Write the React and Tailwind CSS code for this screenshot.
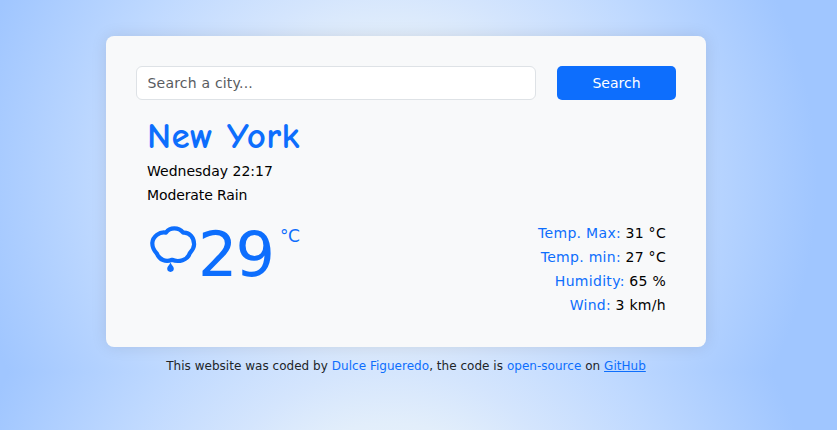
const font = "font-['Verdana','DejaVu_Sans',sans-serif]";

function Stat({ label, value }) {
  return (
    <li>
      <span className="tracking-[0.3px] text-[#0d6efd]">{label}:</span> <span className="tracking-[0.3px]">{value}</span>
    </li>
  );
}

export default function App() {
  return (
    <div className={`flex min-h-screen flex-col items-start bg-[radial-gradient(circle_at_390px_191px,#f5f8f7_0px,#e2eefb_140px,#d4e5fd_195px,#bfd9ff_290px,#a0c6ff_427px)] bg-[length:100%_382px] bg-[position:0_-10px] bg-repeat-y pt-9 pl-[106px] text-[14px] leading-6 text-black ${font}`}>
      <main className="h-[311px] w-[600px] rounded-[8px] bg-[#f8f9fa] p-[30px] shadow-[0_0_16px_rgba(0,0,0,0.1)]">
        <form className="flex gap-[21px]" onSubmit={(e) => e.preventDefault()}>
          <input
            className="h-[34px] w-[400px] rounded-[6px] border border-[#dee2e6] bg-white px-[10.5px] text-[14px] tracking-[0.2px] outline-none placeholder:text-[#595c5f]"
            placeholder="Search a city..."
          />
          <button className="h-[34px] w-[119px] rounded-[5px] bg-[#0d6efd] text-white">Search</button>
        </form>
        <section className="px-[11px] pt-[15px]">
          <h1 className="h-11 font-['Comic_Neue','Comic_Sans_MS','DejaVu_Sans',sans-serif] text-[37px] leading-[42px] font-bold tracking-[0.4px] text-[#0d6efd]">New York</h1>
          <p>Wednesday 22:17</p>
          <p className="tracking-[-0.12px]">Moderate Rain</p>
        </section>
        <section className="flex justify-between pt-[14px] pr-[10px] pl-[11px]">
          <div className="flex text-[#0d6efd]">
            <svg className="mt-1 h-12 w-[53px]" viewBox="147 225 53 48" fill="none">
              <path d="M166 232.6C170 227 178.5 227 183.2 232.6C189.8 232 194.2 238 194.1 244.5C194 248.5 192 250.5 189.8 253.2C187.6 260.3 178.5 262.6 172 259.8C165.5 262.4 159.6 259.8 157 253.8C154.3 251 152.2 248 152.3 243C152.8 236.5 159.5 231.3 166 232.6Z" stroke="#0d6efd" strokeWidth="4.2" strokeLinejoin="round" />
              <path d="M170.5 262.5C169.5 265 167.2 266.5 167.2 268.6A3.3 3.3 0 0 0 173.8 268.6C173.8 266.5 171.5 265 170.5 262.5Z" fill="#0d6efd" />
            </svg>
            <span className="-ml-[2px] text-[62px] leading-[68px] tracking-[-2px]">29</span>
            <span className="pt-[3px] pl-[7px] text-[17px] tracking-[-0.3px]">°C</span>
          </div>
          <ul className="text-right">
            <Stat label="Temp. Max" value="31 °C" />
            <Stat label="Temp. min" value="27 °C" />
            <Stat label="Humidity" value="65 %" />
            <Stat label="Wind" value="3 km/h" />
          </ul>
        </section>
      </main>
      <footer className="w-[600px] pt-[7px] text-center text-[12px] tracking-[0.03px] text-[#212529]">
        This website was coded by <span className="text-[#0d6efd]">Dulce Figueredo</span>, the code is{" "}
        <span className="text-[#0d6efd]">open-source</span> on <a href="#" className="text-[#0d6efd] underline">GitHub</a>
      </footer>
    </div>
  );
}
